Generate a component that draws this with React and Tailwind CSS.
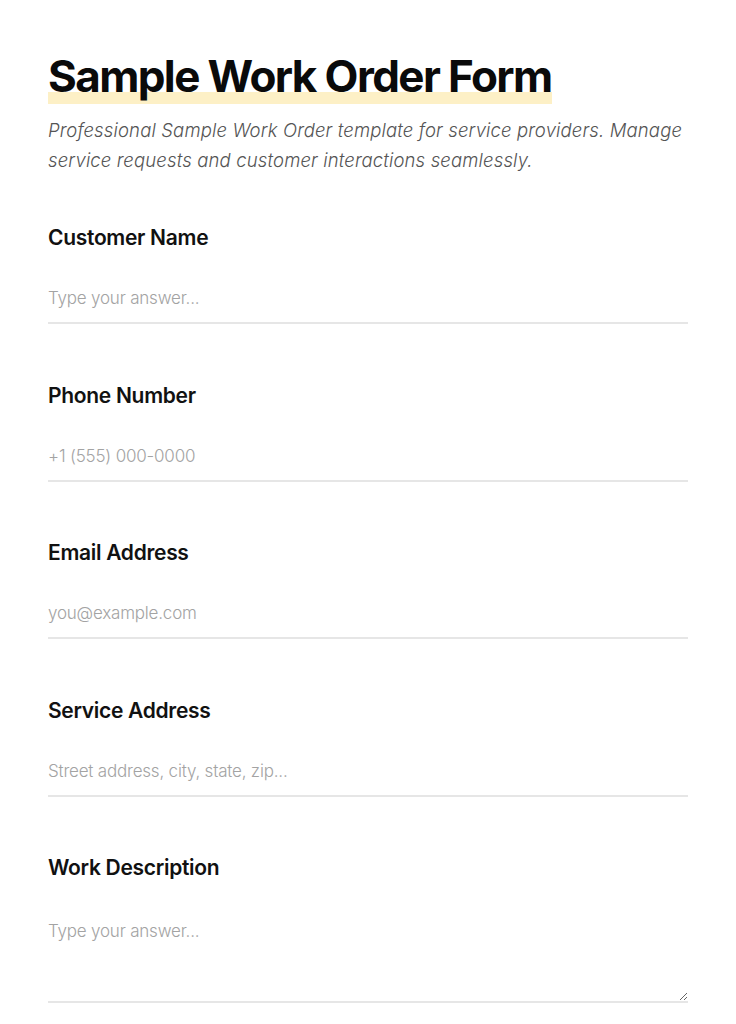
import React from "react";

const fields = [
  { label: "Customer Name", placeholder: "Type your answer...", type: "text" },
  { label: "Phone Number", placeholder: "+1 (555) 000-0000", type: "tel" },
  { label: "Email Address", placeholder: "you@example.com", type: "email" },
  { label: "Service Address", placeholder: "Street address, city, state, zip...", type: "text" },
];

function Field({ label, placeholder, type }) {
  return (
    <div className="mb-[57.5px]">
      <label className="block text-[21px] font-semibold leading-[28px] tracking-[-0.3px] text-[#111]">
        {label}
      </label>
      <input
        type={type}
        placeholder={placeholder}
        className="mt-[34px] block w-full border-b-2 border-[#e6e6e6] bg-transparent pb-[12px] text-[17px] font-light leading-[24px] tracking-[-0.2px] text-[#222] outline-none placeholder:text-[#a3a3a3]"
      />
    </div>
  );
}

export default function App() {
  return (
    <div
      className="min-h-screen bg-white px-12 pt-[50px]"
      style={{ fontFamily: 'Inter, "Noto Sans", sans-serif' }}
    >
      <h1 className="text-[44px] font-bold leading-[52px] tracking-[-1.6px] text-[#0a0a0a]">
        <span className="inline-block bg-[linear-gradient(to_top,#fdf0c6_12px,transparent_12px)] pb-[2px]">
          Sample Work Order Form
        </span>
      </h1>
      <p className="mt-[11px] text-[18.5px] font-light italic leading-[30px] tracking-[0.15px] text-[#555]">
        Professional Sample Work Order template for service providers. Manage service requests and
        customer interactions seamlessly.
      </p>

      <div className="mt-[49px]">
        {fields.map((f) => (
          <Field key={f.label} {...f} />
        ))}
        <div>
          <label className="block text-[21px] font-semibold leading-[28px] tracking-[-0.3px] text-[#111]">
            Work Description
          </label>
          <textarea
            placeholder="Type your answer..."
            className="mt-[37px] block h-[84px] w-full border-b-2 border-[#e6e6e6] bg-transparent text-[17px] font-light leading-[24px] tracking-[-0.2px] text-[#222] outline-none placeholder:text-[#a3a3a3]"
          />
        </div>
      </div>
    </div>
  );
}
